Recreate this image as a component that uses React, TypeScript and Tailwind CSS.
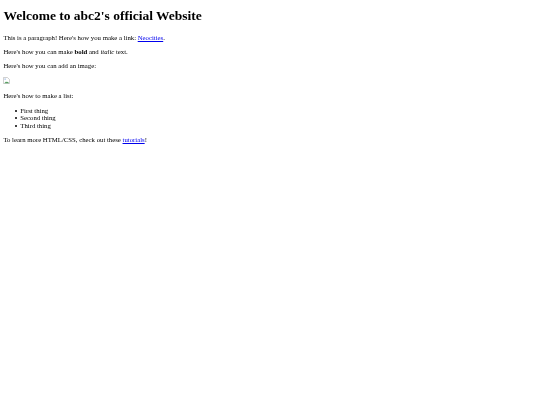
import React from 'react';

export default function App() {
  return (
    <div className="min-h-[405px] bg-white p-[3.4px] font-['Liberation_Serif',serif] text-[6.75px] leading-[7.6px] text-black antialiased blur-[0.25px]">
      <h1 className="mt-[4.5px] mb-[10.5px] text-[13.5px] leading-[15.5px] font-bold">Welcome to abc2's official Website</h1>
      <p className="my-[6.5px]">
        This is a paragraph! Here's how you make a link: <a className="text-[#0000ee] underline" href="#">Neocities</a>.
      </p>
      <p className="my-[6.5px]">
        Here's how you can make <strong>bold</strong> and <em>italic</em> text.
      </p>
      <p className="mt-[6.5px] mb-[7.5px]">Here's how you can add an image:</p>
      <p className="mt-[7.5px] mb-[6.2px]">
        <svg width="7" height="7" viewBox="0 0 16 16" className="inline-block align-baseline">
          <path d="M1 1h9l5 5v9H1z" fill="#fff" stroke="#b4b4b4" strokeWidth="1.5" />
          <path d="M3 14l4-4 2 2 2-1 3 3z" fill="#4f9a5a" />
          <path d="M3 3h4v4H3z" fill="#c4d4ec" />
        </svg>
      </p>
      <p className="mt-[6.2px] mb-[7.3px]">Here's how to make a list:</p>
      <ul className="mt-[7.3px] mb-[6.5px] pl-[16.9px]">
        {['First thing', 'Second thing', 'Third thing'].map((item) => (
          <li key={item} className="relative">
            <span className="absolute top-[3px] left-[-5px] h-[2px] w-[2px] rounded-full bg-black" />
            {item}
          </li>
        ))}
      </ul>
      <p className="my-[6.5px]">
        To learn more HTML/CSS, check out these <a className="text-[#0000ee] underline" href="#">tutorials</a>!
      </p>
    </div>
  );
}
